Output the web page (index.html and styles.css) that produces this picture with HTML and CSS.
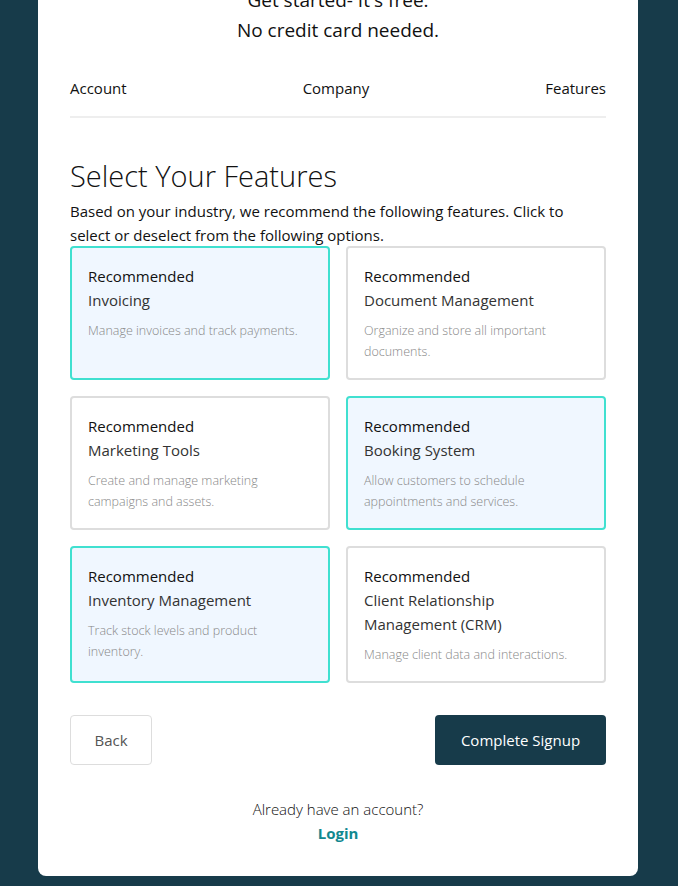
FILE: index.html
```html
<!DOCTYPE html>
<html lang="en">
<head>
<meta charset="utf-8">
<title>Select Your Features</title>
<link rel="stylesheet" href="styles.css">
</head>
<body>
<main class="card">
  <header class="intro">
    <p class="intro-line">Get started- It's free.</p>
    <p class="intro-line">No credit card needed.</p>
  </header>
  <nav class="steps">
    <span class="step">Account</span>
    <span class="step">Company</span>
    <span class="step">Features</span>
  </nav>
  <section class="features">
    <h1 class="title">Select Your Features</h1>
    <p class="lead">Based on your industry, we recommend the following features. Click to select or deselect from the following options.</p>
    <div class="grid">
      <div class="feature selected">
        <div class="tag">Recommended</div>
        <div class="name">Invoicing</div>
        <p class="desc">Manage invoices and track payments.</p>
      </div>
      <div class="feature">
        <div class="tag">Recommended</div>
        <div class="name">Document Management</div>
        <p class="desc">Organize and store all important documents.</p>
      </div>
      <div class="feature">
        <div class="tag">Recommended</div>
        <div class="name">Marketing Tools</div>
        <p class="desc">Create and manage marketing campaigns and assets.</p>
      </div>
      <div class="feature selected">
        <div class="tag">Recommended</div>
        <div class="name">Booking System</div>
        <p class="desc">Allow customers to schedule appointments and services.</p>
      </div>
      <div class="feature selected">
        <div class="tag">Recommended</div>
        <div class="name">Inventory Management</div>
        <p class="desc">Track stock levels and product inventory.</p>
      </div>
      <div class="feature">
        <div class="tag">Recommended</div>
        <div class="name">Client Relationship Management (CRM)</div>
        <p class="desc">Manage client data and interactions.</p>
      </div>
    </div>
    <div class="actions">
      <button class="btn btn-back" type="button">Back</button>
      <button class="btn btn-primary" type="button">Complete Signup</button>
    </div>
  </section>
  <footer class="login">
    <p class="login-text">Already have an account?</p>
    <a class="login-link" href="#">Login</a>
  </footer>
</main>
</body>
</html>
```

FILE: styles.css
```css
* { box-sizing: border-box; }

html, body {
  margin: 0;
  padding: 0;
}

body {
  background: #173b4a;
  font-family: "Open Sans", "Noto Sans", sans-serif;
  color: #111;
  display: flex;
  justify-content: flex-start;
  align-items: flex-end;
  padding: 0 0 10px 38px;
  height: 886px;
  overflow: hidden;
}

.card {
  width: 600px;
  flex-shrink: 0;
  background: #fff;
  border-radius: 8px;
  padding: 0 32px 31px;
}

.intro {
  text-align: center;
}

.intro-line {
  margin: 0;
  font-size: 19px;
  line-height: 30px;
  color: #111;
}

.steps {
  display: flex;
  justify-content: space-between;
  align-items: center;
  margin-top: 31px;
  padding-bottom: 16px;
  border-bottom: 2px solid #eeeeee;
  font-size: 15px;
  line-height: 24px;
}

.features {
  padding-top: 39px;
}

.title {
  margin: 0 0 4px;
  font-size: 29px;
  font-weight: 300;
  line-height: 38px;
  color: #111;
}

.lead {
  margin: 0 0 -1px;
  font-size: 15px;
  line-height: 24px;
}

.grid {
  display: grid;
  grid-template-columns: 1fr 1fr;
  gap: 16px;
}

.feature {
  border: 2px solid #dddddd;
  border-radius: 4px;
  padding: 16px;
  background: #fff;
}

.feature.selected {
  border-color: #40e0d0;
  background: #f0f7ff;
}

.tag {
  font-size: 15px;
  line-height: 24px;
  color: #111;
}

.name {
  font-size: 15px;
  line-height: 24px;
  color: #333;
}

.desc {
  margin: 8px 0 0;
  font-size: 12.5px;
  line-height: 21px;
  font-weight: 300;
  color: #888;
}

.actions {
  display: flex;
  justify-content: space-between;
  margin-top: 32px;
}

.btn {
  font-family: inherit;
  font-size: 15px;
  height: 50px;
  border-radius: 4px;
  cursor: pointer;
}

.btn-back {
  width: 82px;
  background: #fff;
  border: 1px solid #dddddd;
  color: #555;
}

.btn-primary {
  width: 171px;
  background: #173b4a;
  border: none;
  color: #fff;
}

.login {
  margin-top: 32px;
  text-align: center;
}

.login-text {
  margin: 0;
  font-size: 15px;
  line-height: 24px;
  font-weight: 300;
  color: #111;
}

.login-link {
  display: inline-block;
  font-size: 15px;
  line-height: 24px;
  font-weight: 700;
  color: #11888f;
  text-decoration: none;
}
```
